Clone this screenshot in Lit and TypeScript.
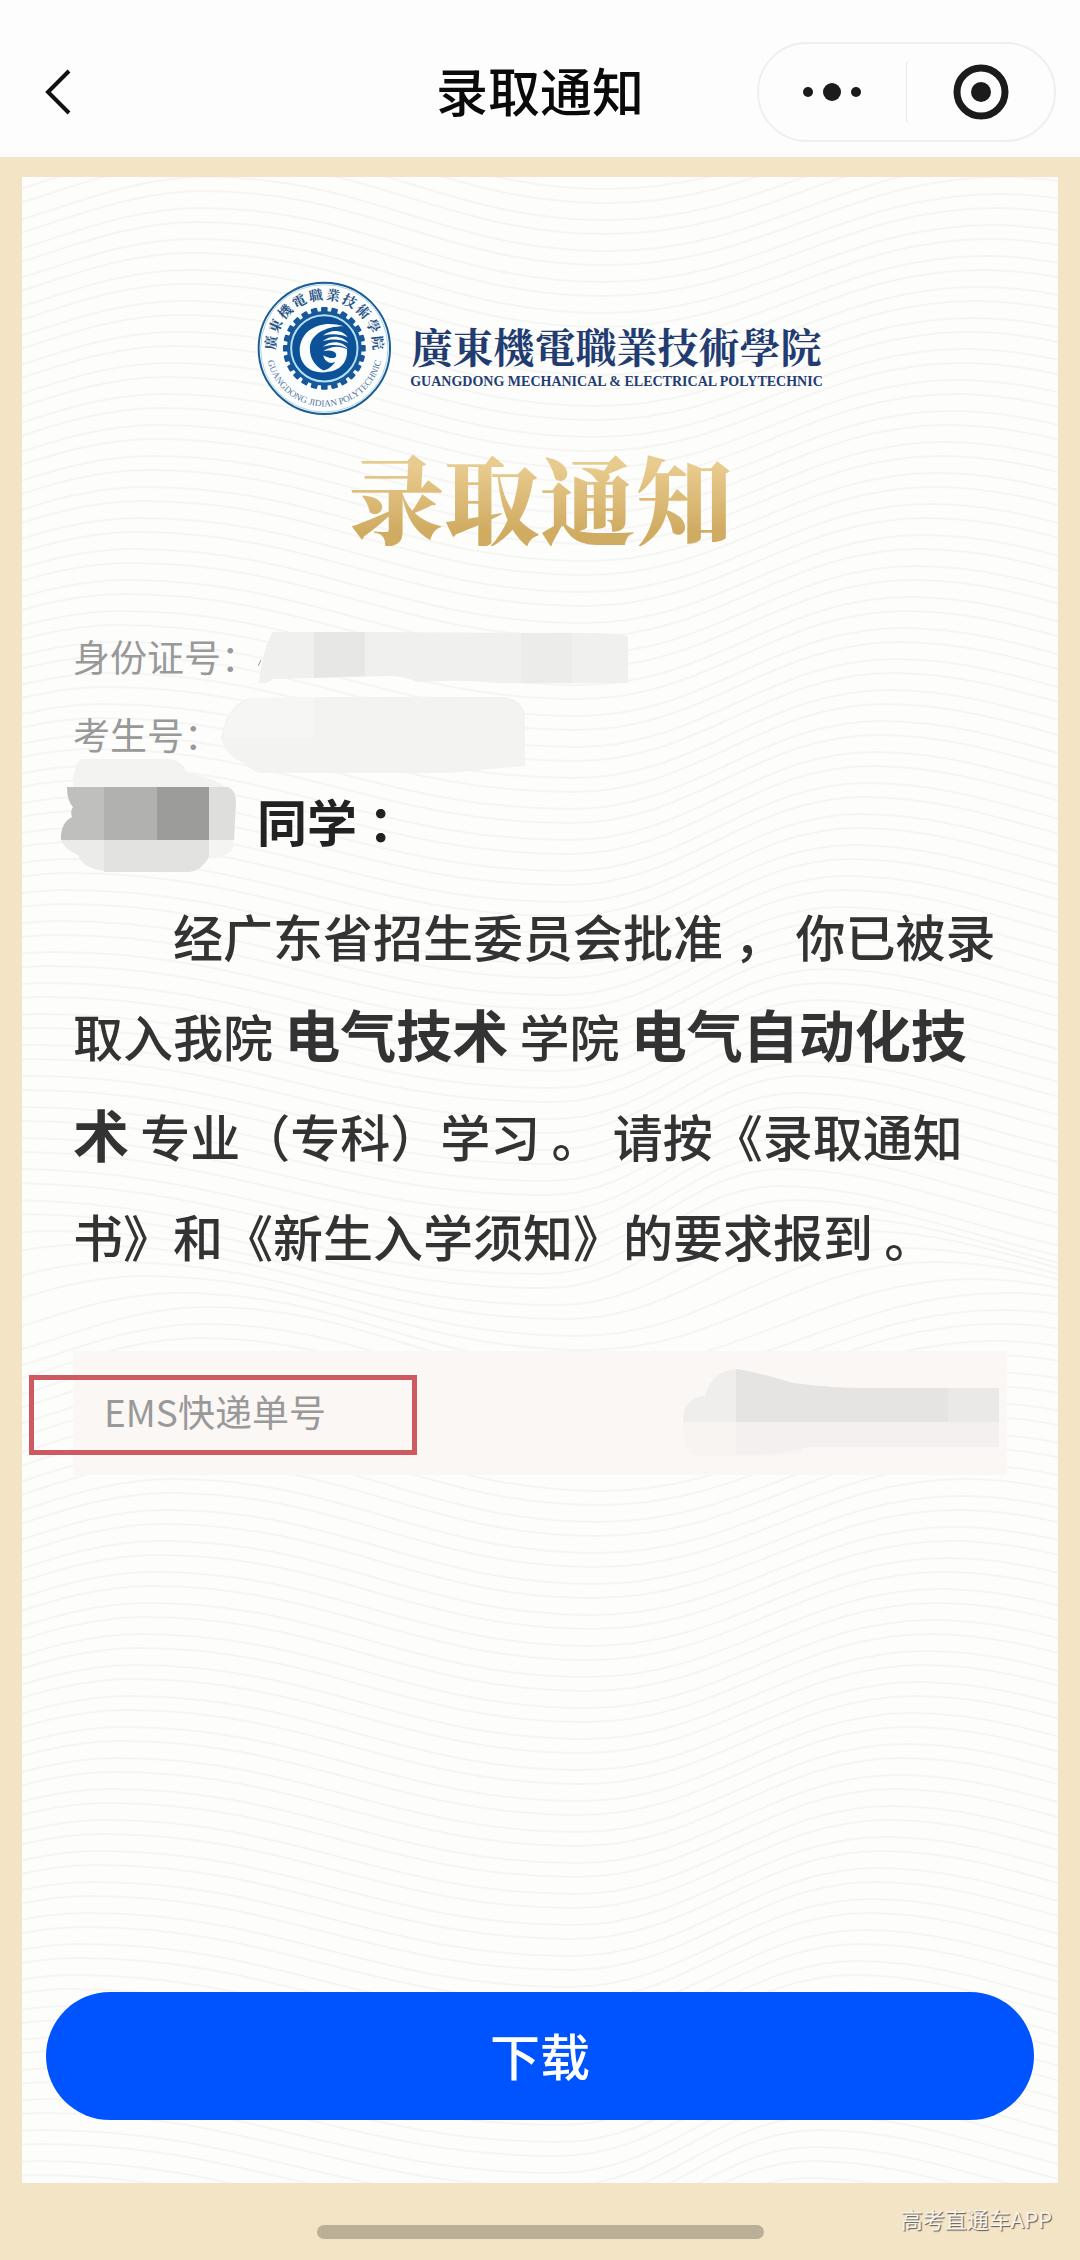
import { LitElement, html, css, svg } from 'lit';
import { customElement, property } from 'lit/decorators.js';

const SEAL_CHARS = [...'廣東機電職業技術學院'];
const SEAL_CENTER = 235;

@customElement('school-seal')
export class SchoolSeal extends LitElement {
  static override styles = css`
    :host {
      display: block;
      width: 135px;
      height: 135px;
    }

    svg {
      display: block;
      width: 100%;
      height: 100%;
    }

    .chars {
      font: bold 42px 'KaiTi', 'Noto Serif CJK TC', 'Noto Sans CJK TC', serif;
      fill: #1f5283;
      text-anchor: middle;
    }

    .latin {
      font: 28px 'Liberation Serif', serif;
      fill: #55799f;
      text-anchor: middle;
    }
  `;

  private renderChar(char: string, index: number) {
    const angle = -84 + (index * 168) / (SEAL_CHARS.length - 1);
    return svg`<text
      x=${SEAL_CENTER}
      y="87"
      transform="rotate(${angle} ${SEAL_CENTER} ${SEAL_CENTER})"
    >${char}</text>`;
  }

  private renderTooth(index: number) {
    return svg`<rect
      x="225" y="109" width="20" height="24" rx="3"
      transform="rotate(${index * 15} ${SEAL_CENTER} ${SEAL_CENTER})"
    />`;
  }

  override render() {
    return html`
      <svg viewBox="30 30 411 411" role="img" aria-label="校徽">
        <circle cx="235" cy="235" r="200" fill="#fcfdfd" stroke="#1c5c93" stroke-width="6" />
        <circle cx="235" cy="235" r="194" fill="none" stroke="#a9d5e6" stroke-width="3" />
        <g class="chars">${SEAL_CHARS.map((c, i) => this.renderChar(c, i))}</g>
        <path id="lower" d="M58 235 A177 177 0 0 0 412 235" fill="none" />
        <text class="latin"><textPath href="#lower" startOffset="50%">GUANGDONG JIDIAN POLYTECHNIC</textPath></text>
        <g fill="#17589b">
          ${Array.from({ length: 24 }, (_, i) => this.renderTooth(i))}
          <circle cx="235" cy="235" r="114" />
        </g>
        <circle cx="235" cy="235" r="101" fill="#0d5299" stroke="#b5e2f4" stroke-width="6" />
        <g fill="#fafdfd">
          <path d="M294 168 C228 146 162 176 160 240 C160 290 200 314 244 307 C212 296 190 270 191 233 C193 194 236 168 294 168 Z" />
          <path d="M222 306 C274 314 308 282 304 238 C284 226 252 228 232 244 C254 238 274 246 271 258 C267 268 248 266 232 256 C236 278 256 284 268 276 C258 294 240 302 222 306 Z" />
          <path d="M231 196 C256 176 290 178 306 201 C282 190 256 190 231 196 Z" />
          <path d="M230 213 C256 193 290 196 308 219 C284 206 256 206 230 213 Z" />
          <path d="M230 230 C256 211 290 212 306 236 C284 222 256 223 230 230 Z" />
        </g>
      </svg>
    `;
  }
}

const TILE = 1130;
const DRIFT = 1030;

@customElement('wave-backdrop')
export class WaveBackdrop extends LitElement {
  static override styles = css`
    :host {
      display: block;
    }

    svg {
      display: block;
      width: 100%;
      height: 100%;
    }

    path {
      fill: none;
      stroke: #f5f5f4;
      stroke-width: 2;
    }
  `;

  // The wave drifts to the left over one tile, then swings back for the next.
  private shiftAt(top: number) {
    if (top < 0) return 0;
    const y = top % TILE;
    return y < DRIFT ? y / DRIFT : (TILE - y) / (TILE - DRIFT);
  }

  private line(top: number) {
    const shift = this.shiftAt(top);
    const crest = 185 - shift * 205;
    const trough = 585 - shift * 65;
    const crest2 = 985 - shift * 230;
    const low = top + 74;
    const high = top - 14;
    const a = (trough - crest) * 0.4;
    const b = (crest2 - trough) * 0.4;
    return (
      `M${crest - 300} ${top + 70} C${crest - 170} ${top + 50} ${crest - 100} ${top} ${crest} ${top} ` +
      `C${crest + a} ${top} ${trough - a} ${low} ${trough} ${low} ` +
      `C${trough + b} ${low} ${crest2 - b} ${high} ${crest2} ${high} ` +
      `C${crest2 + 120} ${high} ${crest2 + 220} ${high + 60} ${crest2 + 400} ${high + 80}`
    );
  }

  override render() {
    const tops: number[] = [];
    for (let y = -93; y < 2040; y += 31) tops.push(y, y + 14);
    return html`
      <svg viewBox="0 0 1036 2006" preserveAspectRatio="xMidYMin slice" aria-hidden="true">
        ${tops.map((y) => svg`<path d=${this.line(y)} />`)}
      </svg>
    `;
  }
}

@customElement('notice-field')
export class NoticeField extends LitElement {
  static override styles = css`
    :host {
      display: flex;
      align-items: center;
      height: 78px;
      color: #999;
      font-size: 37px;
      line-height: 54px;
    }

    span {
      padding-bottom: 4px;
    }
  `;

  @property({ type: String })
  label = '';

  override render() {
    return html`<span>${this.label}：</span><slot></slot>`;
  }
}

@customElement('app-root')
export class AppRoot extends LitElement {
  static override styles = css`
    :host {
      display: flex;
      flex-direction: column;
      min-height: 100vh;
      background: #f4e4c6;
      color: #333;
      font-family: 'Noto Sans CJK SC', sans-serif;
    }

    * {
      box-sizing: border-box;
    }

    svg {
      display: block;
      flex: none;
    }

    button {
      border: none;
      background: none;
      padding: 0;
      color: inherit;
      font-family: inherit;
      cursor: pointer;
    }

    .navbar {
      display: grid;
      grid-template-columns: 1fr auto 1fr;
      align-items: center;
      padding: 42px 24px 15px;
      background: #fdfdfd;
    }

    .navbar h1 {
      margin: 0;
      padding-bottom: 4px;
      color: #0a0a0a;
      font-size: 52px;
      font-weight: 500;
      line-height: 96px;
    }

    .back {
      justify-self: start;
      padding-left: 16px;
    }

    .capsule {
      display: flex;
      justify-self: end;
      align-items: center;
      width: 299px;
      height: 100px;
      border: 2px solid #efefef;
      border-radius: 50px;
    }

    .capsule button {
      display: grid;
      flex: 1;
      place-items: center;
      height: 60px;
    }

    .capsule button + button {
      border-left: 1px solid #e9e9e9;
    }

    main {
      display: flex;
      flex: 1;
      flex-direction: column;
      padding: 20px 22px 0;
    }

    .card {
      position: relative;
      display: flex;
      flex: 1;
      flex-direction: column;
      padding: 104px 24px 63px;
      background: #fdfdfb;
    }

    .waves {
      position: absolute;
      inset: 0;
      overflow: hidden;
    }

    .brand,
    .title,
    .letter,
    .download {
      position: relative;
    }

    .brand {
      display: flex;
      align-items: center;
      justify-content: center;
      gap: 18px;
    }

    .brand-text {
      padding-top: 14px;
      color: #223c72;
      text-align: center;
    }

    .brand-zh {
      font-family: 'KaiTi', 'Noto Serif CJK TC', 'Noto Sans CJK TC', serif;
      font-size: 41px;
      font-weight: 700;
      line-height: 52px;
    }

    .brand-en {
      font-family: 'Liberation Serif', serif;
      font-size: 14px;
      font-weight: 700;
      line-height: 20px;
    }

    .title {
      align-self: center;
      margin: 30px 0 73px;
      background: linear-gradient(#e8cb8e 20%, #d0ab62 85%);
      background-clip: text;
      color: transparent;
      font-family: 'Noto Serif CJK SC', 'Noto Sans CJK SC', serif;
      font-size: 96px;
      font-weight: 900;
      line-height: 100px;
    }

    .letter {
      margin: 0 27px;
    }

    .student {
      display: flex;
      align-items: center;
      height: 94px;
      margin-left: -12px;
      color: #222;
      font-size: 50px;
      font-weight: 700;
      line-height: 74px;
    }

    .student span {
      padding-bottom: 4px;
    }

    .student svg {
      margin: -18px 20px -18px 0;
    }

    .body {
      margin: 16px 0 66px;
      font-size: 50px;
      font-weight: 500;
      line-height: 100px;
      text-indent: 2em;
    }

    .body strong {
      font-size: 56px;
      font-weight: 700;
      line-height: 56px;
    }

    .express {
      position: relative;
      display: flex;
      align-items: center;
      justify-content: space-between;
      height: 124px;
      padding: 0 8px 0 31px;
      background: #fbf7f5;
      color: #999;
      font-size: 37px;
      line-height: 54px;
    }

    .express span {
      padding-bottom: 4px;
    }

    .marker {
      position: absolute;
      top: 24px;
      left: -44px;
      width: 388px;
      height: 80px;
      border: 5px solid #cc5a60;
    }

    .download {
      height: 128px;
      margin-top: auto;
      padding-bottom: 4px;
      border-radius: 64px;
      background: #0054ff;
      color: #fff;
      font-size: 50px;
      font-weight: 500;
    }

    footer {
      display: grid;
      grid-template-columns: 1fr 447px 1fr;
      height: 77px;
      padding: 0 28px;
    }

    .home-bar {
      grid-column: 2;
      align-self: end;
      height: 14px;
      margin-bottom: 21px;
      border-radius: 7px;
      background: #bab098;
    }

    .watermark {
      justify-self: end;
      padding-top: 20px;
      color: #f8f4ea;
      font-size: 22px;
      line-height: 30px;
      text-shadow: 1px 1px 1px #555;
    }
  `;

  private renderNavbar() {
    return html`
      <header class="navbar">
        <button class="back" aria-label="返回">
          <svg width="36" height="52" viewBox="0 0 36 52" fill="none" stroke="#111" stroke-width="4">
            <path d="M29 5 L8 26 L29 47" />
          </svg>
        </button>
        <h1>录取通知</h1>
        <div class="capsule">
          <button aria-label="更多">
            <svg width="60" height="20" viewBox="0 0 60 20" fill="#1b1b1b">
              <circle cx="5" cy="10" r="5" />
              <circle cx="29" cy="10" r="9" />
              <circle cx="53" cy="10" r="5" />
            </svg>
          </button>
          <button aria-label="关闭">
            <svg width="56" height="56" viewBox="0 0 56 56">
              <circle cx="28" cy="28" r="24" fill="none" stroke="#1b1b1b" stroke-width="7" />
              <circle cx="28" cy="28" r="10" fill="#1b1b1b" />
            </svg>
          </button>
        </div>
      </header>
    `;
  }

  private renderIdMask() {
    return html`
      <svg width="371" height="52" viewBox="0 0 371 52" aria-hidden="true">
        <path d="M0 34 L3 28" stroke="#999" stroke-width="1" />
        <path d="M15 0 H105 L280 1 Q366 0 370 5 V51 H240 Q200 47 160 50 Q146 44 130 44 L15 47 Q10 52 1 51 L3 36 Q8 10 15 0 Z" fill="#f0f0ef" />
        <path d="M56 0 H107 V44 L56 46 Z" fill="#e7e7e6" />
        <path d="M263 1 H314 V51 H263 Z" fill="#ececeb" />
      </svg>
    `;
  }

  private renderExamMask() {
    return html`
      <svg width="305" height="80" viewBox="5 0 305 80" aria-hidden="true">
        <path d="M34 2 Q160 0 290 1 Q306 4 309 18 V70 L230 77 H44 Q34 74 30 68 Q9 60 5 42 Q11 8 34 2 Z" fill="#f3f3f2" />
        <path d="M38 2 H98 V42 H7 Q11 10 38 2 Z" fill="#f6f6f5" />
      </svg>
    `;
  }

  private renderNameMask() {
    return html`
      <svg width="176" height="130" viewBox="62 758 176 130" aria-hidden="true">
        <path d="M74 790 Q74 762 84 760 H170 Q184 762 188 774 Q214 778 228 789 Z" fill="#f3f3f1" />
        <path d="M68 788 H105 V841 H62 Q61 824 73 818 Q71 812 74 808 Q68 802 68 788 Z" fill="#bfbfbe" />
        <path d="M105 788 H158 V841 H105 Z" fill="#b1b1b0" />
        <path d="M158 788 H210 V841 H158 Z" fill="#9c9c9b" />
        <path d="M210 788 H229 Q237 791 237 804 L235 841 H210 Z" fill="#dededd" />
        <path d="M62 841 H106 V872 Q84 870 79 856 Q65 850 62 841 Z" fill="#ebebea" />
        <path d="M105 841 H210 V858 Q202 872 190 873 H105 Z" fill="#e2e2e1" />
        <path d="M210 841 H235 Q236 858 210 860 Z" fill="#f4f4f2" />
      </svg>
    `;
  }

  private renderExpressMask() {
    return html`
      <svg width="316" height="88" viewBox="0 0 316 88" aria-hidden="true">
        <path d="M0 53 H120 V84 Q60 90 10 86 Q0 84 0 53 Z" fill="#f8f4f1" />
        <path d="M53 53 H316 V78 H125 Q100 86 53 86 Z" fill="#f4f0ef" />
        <path d="M0 53 Q0 28 22 27 Q28 2 54 0 V53 Z" fill="#f0eeec" />
        <path d="M53 0 Q70 2 110 14 Q150 19 180 19 H316 V53 H53 Z" fill="#e5e4e3" />
        <path d="M265 19 H316 V53 H265 Z" fill="#eae9e8" />
      </svg>
    `;
  }

  override render() {
    return html`
      ${this.renderNavbar()}
      <main>
        <article class="card">
          <wave-backdrop class="waves"></wave-backdrop>
          <div class="brand">
            <school-seal></school-seal>
            <div class="brand-text">
              <div class="brand-zh" lang="zh-Hant">廣東機電職業技術學院</div>
              <div class="brand-en" lang="en">GUANGDONG MECHANICAL &amp; ELECTRICAL POLYTECHNIC</div>
            </div>
          </div>
          <h2 class="title">录取通知</h2>
          <section class="letter">
            <notice-field label="身份证号">${this.renderIdMask()}</notice-field>
            <notice-field label="考生号">${this.renderExamMask()}</notice-field>
            <div class="student">${this.renderNameMask()}<span>同学 ：</span></div>
            <p class="body">
              经广东省招生委员会批准 ， 你已被录取入我院 <strong>电气技术</strong> 学院
              <strong>电气自动化技术</strong> 专业（专科）学习 。
              请按《录取通知书》和《新生入学须知》的要求报到 。
            </p>
            <div class="express">
              <span>EMS快递单号</span>
              ${this.renderExpressMask()}
              <div class="marker"></div>
            </div>
          </section>
          <button class="download">下载</button>
        </article>
      </main>
      <footer>
        <div class="home-bar"></div>
        <span class="watermark">高考直通车APP</span>
      </footer>
    `;
  }
}

declare global {
  interface HTMLElementTagNameMap {
    'school-seal': SchoolSeal;
    'wave-backdrop': WaveBackdrop;
    'notice-field': NoticeField;
    'app-root': AppRoot;
  }
}
